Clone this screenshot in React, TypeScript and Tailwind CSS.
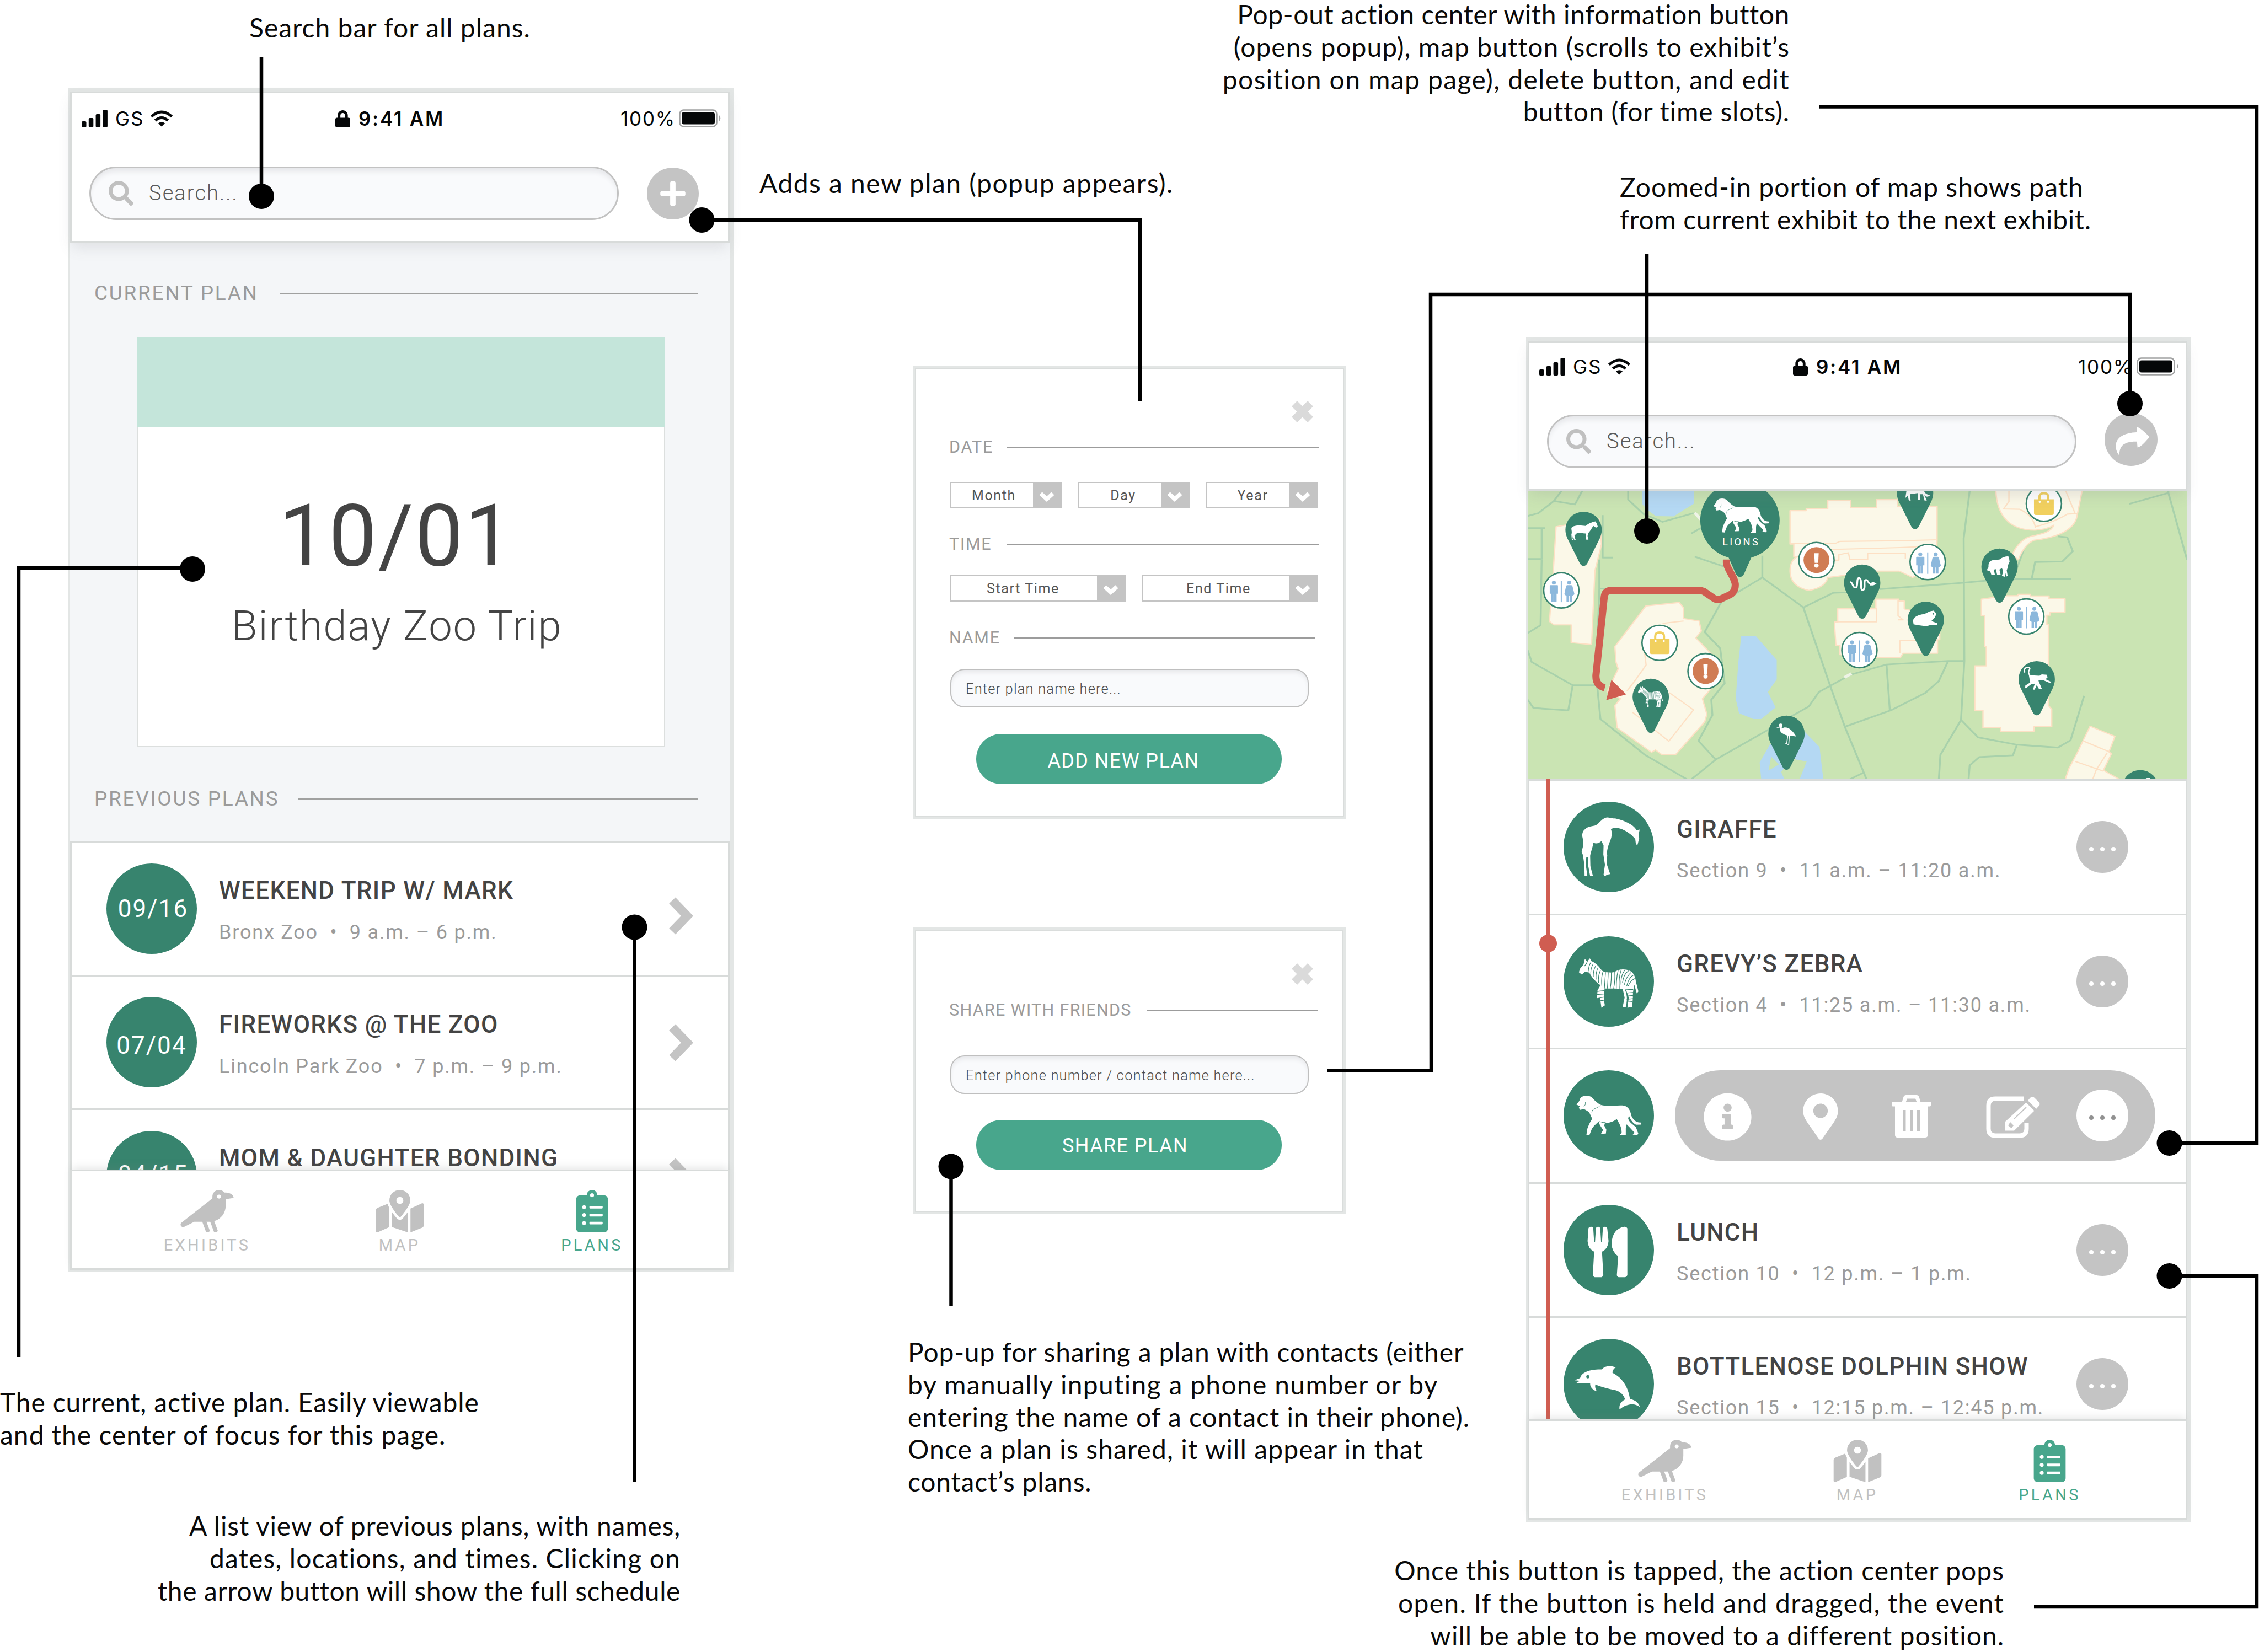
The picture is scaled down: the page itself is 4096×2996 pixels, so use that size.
import type { ReactNode } from "react";
import { FaClipboardList, FaCrow, FaInfoCircle, FaLock, FaMapMarkedAlt, FaMapMarkerAlt, FaPlus, FaSearch } from "react-icons/fa";

/* ---------- Animal and meal drawings ---------- */

function Zebra({ className = "", stripe = "#37846e", ...rest }: { className?: string; stripe?: string; x?: number; y?: number; width?: number; height?: number }) {
  return (
    <svg viewBox="234 696 264 194" preserveAspectRatio="none" className={className} {...rest}>
      <path
        fill="#fff"
        d="M236 752L241 738L256 722L262 700L272 711L284 698L290 709C306 714 322 728 333 742C340 750 350 753 362 752C376 753 384 754 395 749C412 738 440 738 462 748C476 756 482 772 484 788L495 826L488 834L477 800C474 815 470 830 471 850L468 886L447 889L453 850L442 822L435 816C447 840 447 855 441 885L426 888L435 850L427 817C400 814 372 815 348 815L346 830C342 850 346 865 349 880L334 889L328 850L315 852L317 822L330 802C310 790 290 770 281 753L262 750L249 761Z"
      />
      <g fill="none" stroke={stripe} strokeWidth="2.800">
        <path d="M274 706Q268 725 258 728M288 714Q278 728 277 748M298 720Q286 738 288 760M309 727Q297 748 299 770M319 735Q308 756 311 780M330 744Q318 768 322 792M340 752Q332 775 336 806" />
        <path d="M352 752Q349 785 347 815M364 752Q362 790 360 815M377 752Q378 790 372 815M392 750Q394 790 387 815M407 744Q398 775 399 815M421 742Q408 770 412 815M437 742Q416 765 420 802M452 746Q430 760 426 792M464 752Q442 768 434 800M473 763Q452 774 444 806M480 776Q462 782 450 806" />
        <path d="M314 826L346 823M314 838L344 836M328 850L346 848M330 862L346 860M438 820L472 818M442 832L472 830M444 844L472 842M444 856L472 854M442 868L470 866" />
      </g>
    </svg>
  );
}

function Lion({ className = "", line = "#37846e", ...rest }: { className?: string; line?: string; x?: number; y?: number; width?: number; height?: number }) {
  return (
    <svg viewBox="229 1236 281 158" preserveAspectRatio="none" className={className} {...rest}>
      <path
        fill="#fff"
        d="M230 1273L242 1259L247 1247C262 1235 285 1236 298 1246C308 1256 320 1268 338 1275C370 1282 410 1273 436 1277C455 1281 463 1297 467 1316C475 1332 487 1343 508 1342L509 1350L487 1351C473 1344 463 1331 458 1318L453 1324C454 1340 475 1350 487 1361L497 1385L493 1390L473 1389L480 1381C466 1366 455 1357 447 1349L443 1365V1392H416L425 1382C426 1360 414 1345 404 1329C388 1340 366 1345 353 1344L350 1354L359 1370L357 1385L336 1386L345 1371L331 1352L326 1338C316 1348 303 1355 296 1368L286 1391L273 1390L277 1366C284 1350 289 1340 298 1328L289 1310C285 1300 274 1296 262 1290L246 1293L240 1285L245 1279Z"
      />
      <g fill="none" stroke={line} strokeWidth="2">
        <path d="M334 1275C325 1286 304 1287 298 1296L296 1306" />
        <path d="M268 1262Q272 1272 261 1282M328 1338Q345 1344 356 1342" />
      </g>
    </svg>
  );
}

function Giraffe() {
  return (
    <svg viewBox="174 96 391 350" preserveAspectRatio="none" className="h-full w-full">
      <path
        fill="#fff"
        d="M365 157C376 158 384 161 400 161C425 166 447 174 465 184C476 190 484 198 490 206L503 204L499 222L501 238L494 262L487 262L484 240L468 225C450 213 430 200 402 197C392 196 384 199 379 203C387 220 380 240 371 257C364 275 360 290 363 303L360 335L374 372L375 376L362 378L353 384L347 378L353 340L346 300L347 265L338 248C325 258 315 260 303 254C301 270 292 290 289 305L290 345L301 383L289 384L281 345L279 310L272 312L271 345L277 383L265 384L264 340L258 303L252 288C259 270 262 255 255 230C254 212 262 205 275 197C290 188 305 194 322 182C335 170 350 156 365 157Z"
      />
    </svg>
  );
}

function Cutlery() {
  return (
    <svg viewBox="92 133 207 396" preserveAspectRatio="none" className="h-full w-full" fill="#fff">
      <path d="M149 236Q150 229 155 229Q159 229 160 236L162 297H164L166 236Q167 229 171 229Q175 229 176 236L178 297H180L182 236Q183 229 187 229Q191 229 192 236L195 292Q194 326 180 338L183 440Q182 450 176 450H166Q160 450 159 440L162 338Q148 326 147 292Z" />
      <path d="M238 236V440Q237 450 230 450H221Q214 450 214 440L217 358Q202 338 202 300Q204 240 230 229Q236 228 238 236Z" />
    </svg>
  );
}

function Dolphin() {
  return (
    <svg viewBox="92 723 207 396" preserveAspectRatio="none" className="h-full w-full">
      <path
        fill="#fff"
        d="M118 905Q124 897 130 895C133 866 158 855 180 857Q184 843 200 842L212 848Q204 856 204 872C224 890 240 930 244 986C254 990 263 1000 267 1021Q256 1008 246 1010Q232 1014 220 1032C219 1008 224 998 233 988C229 968 222 954 211 948C195 942 178 935 165 923C163 935 166 945 168 953C158 947 152 932 153 918L134 917Q124 920 121 913L131 907Z"
      />
      <ellipse cx="147.500" cy="889" rx="3.500" ry="7" fill="#37846e" />
    </svg>
  );
}

/* ---------- Small glyphs ---------- */

function ChevronRight({ className }: { className: string }) {
  return (
    <svg viewBox="0 0 46 70" className={`h-[70px] w-[46px] ${className}`}>
      <path d="M8 7L35 35L8 63" fill="none" stroke="#c4c4c4" strokeWidth="16" />
    </svg>
  );
}

function ChevronDown() {
  return (
    <svg viewBox="0 0 28 19" className="mt-[5px] h-[19px] w-[28px]">
      <path d="M3 4L14 14L25 4" fill="none" stroke="#fff" strokeWidth="7.500" />
    </svg>
  );
}

function Close() {
  return (
    <svg viewBox="0 0 41 41" className="ml-[618px] h-[41px] w-[41px]">
      <path d="M6 6L35 35M35 6L6 35" stroke="#dadada" strokeWidth="14" />
    </svg>
  );
}

function SignalBars() {
  return (
    <svg viewBox="0 0 47 32" className="h-8 w-[47px]" fill="#050708">
      <rect x="0" y="21" width="8.500" height="11" rx="2" />
      <rect x="12.800" y="15" width="8.500" height="17" rx="2" />
      <rect x="25.600" y="8" width="8.500" height="24" rx="2" />
      <rect x="38.400" y="0" width="8.500" height="32" rx="2" />
    </svg>
  );
}

function Wifi() {
  return (
    <svg viewBox="0 0 42 30" className="h-[30px] w-[42px]" fill="none" stroke="#050708" strokeWidth="5">
      <path d="M2.500 11.500Q21 -5.500 39.500 11.500" />
      <path d="M9.500 18.500Q21 8.500 32.500 18.500" />
      <path d="M21 29.500L15 23.500Q21 19 27 23.500Z" fill="#050708" stroke="none" />
    </svg>
  );
}

function Battery() {
  return (
    <svg viewBox="0 0 78 34" className="h-[34px] w-[78px]">
      <rect x="1.500" y="1.500" width="67" height="30" rx="7" fill="none" stroke="#a0a1a1" strokeWidth="2.500" />
      <rect x="5" y="5.500" width="60" height="22" rx="4" fill="#050708" />
      <path d="M73 11Q77.500 16.500 73 22Z" fill="#a0a1a1" />
    </svg>
  );
}

/* ---------- Phone shell ---------- */

function StatusBar() {
  return (
    <div className="flex h-10 items-center pl-[18px] font-[Inter,sans-serif] text-[35px] leading-10 text-[#050708]">
      <SignalBars />
      <span className="ml-[14px] w-[63px] tracking-[2px]">GS</span>
      <Wifi />
      <FaLock className="ml-[294px] h-[33px] w-[27px]" />
      <span className="ml-[15px] w-[170px] font-semibold tracking-[2.700px]">9:41 AM</span>
      <span className="ml-[305px] w-[106px] whitespace-nowrap tracking-[1.8px]">100%</span>
      <Battery />
    </div>
  );
}

function SearchField() {
  return (
    <div className="flex h-[97px] w-[960px] items-center rounded-full border-[3px] border-[#c2c2c2] bg-[#f9fafc] pl-[32px] text-[38px] font-light tracking-[2.1px] text-[#5a5a5a] shadow-[inset_0_10px_10px_-4px_#e6e7ea]">
      <FaSearch className="h-[45px] w-[45px] text-[#c0c0c0]" />
      <span className="ml-[28px]">Search...</span>
    </div>
  );
}

function NavItem({ icon, label, tone }: { icon: ReactNode; label: string; tone: string }) {
  return (
    <div className={`flex w-[349px] flex-col items-center ${tone}`}>
      {icon}
      <span className="mt-2 text-[29px] leading-[30px] tracking-[4.3px]">{label}</span>
    </div>
  );
}

function TabBar() {
  return (
    <div className="relative flex h-[182px] shrink-0 items-start border-[3px] border-[#d8dbda] bg-white pl-[71px] pt-[34px] shadow-[0_-8px_14px_-4px_rgba(120,125,130,0.18)]">
      <NavItem tone="text-[#c1c1c1]" label="EXHIBITS" icon={<FaCrow className="h-[77px] w-[97px]" />} />
      <NavItem tone="text-[#c1c1c1]" label="MAP" icon={<FaMapMarkedAlt className="h-[77px] w-[88px]" />} />
      <NavItem tone="text-[#48a68c]" label="PLANS" icon={<FaClipboardList className="h-[77px] w-[59px]" />} />
    </div>
  );
}

function Phone({ place, headerSize, action, children }: { place: string; headerSize: string; action: ReactNode; children: ReactNode }) {
  return (
    <section
      className={`absolute flex h-[2148px] w-[1206px] flex-col border-b-4 border-l-[3px] border-r-[7px] border-t-[7px] border-[#e3e6e5] bg-white font-[Roboto,sans-serif] ${place}`}
    >
      <header className={`relative z-10 shrink-0 border-[3px] border-b-4 border-[#d8dbda] bg-white shadow-[0_12px_24px_-4px_rgba(110,115,125,0.16)] ${headerSize}`}>
        <StatusBar />
        <div className="mt-[67px] flex items-center gap-[51px] pl-[32px]">
          <SearchField />
          {action}
        </div>
      </header>
      <div className="flex min-h-0 flex-1 flex-col overflow-hidden">{children}</div>
      <TabBar />
    </section>
  );
}

/* ---------- First screen: plans ---------- */

function SectionHeading({ label, labelWidth }: { label: string; labelWidth: string }) {
  return (
    <div className="flex h-[44px] items-center pl-[44px] pr-[57px] text-[#9b9b9b]">
      <span className={`text-[37px] leading-[44px] tracking-[2.700px] whitespace-nowrap ${labelWidth}`}>{label}</span>
      <span className="h-[3px] flex-1 bg-[#a0a1a0]" />
    </div>
  );
}

function PlanRow({ date, dateShift, title, detail, arrowShift }: { date: string; dateShift: string; title: string; detail?: string; arrowShift: string }) {
  return (
    <div className="flex h-[242.600px] shrink-0 items-center border-t-[3px] border-[#d8dbda] pl-[63px]">
      <div className="flex size-[164px] items-center justify-center rounded-full bg-[#37846e] text-[44px] leading-none tracking-[2.1px] text-white">
        <span className={dateShift}>{date}</span>
      </div>
      <div className="ml-[40px] mt-[9px] h-[126px] w-[814px] whitespace-nowrap">
        <div className="text-[44px] font-medium leading-[52px] tracking-[1.34px] text-[#444]">{title}</div>
        {detail && <div className="mt-[26px] text-[36px] leading-[48px] tracking-[1.8px] whitespace-pre text-[#9b9b9b]">{detail}</div>}
      </div>
      <ChevronRight className={arrowShift} />
    </div>
  );
}

function PlansScreen() {
  return (
    <Phone
      place="left-[124px] top-[159px]"
      headerSize="h-[275px] pt-[26px]"
      action={
        <div className="flex size-[94px] items-center justify-center rounded-full bg-[#c4c4c4]">
          <FaPlus className="size-[52px] text-white" />
        </div>
      }
    >
      <div className="flex h-[1084px] shrink-0 flex-col bg-[#f4f6f8] pt-[69px]">
        <SectionHeading label="CURRENT PLAN" labelWidth="w-[336px]" />
        <div className="ml-[121px] mt-[58px] h-[743px] w-[958px] border-2 border-[#dcdfde] bg-white text-[#444]">
          <div className="-mx-[2px] -mt-[2px] h-[163px] bg-[#c4e5da]" />
          <div className="mt-[120px] pl-[256px] text-[155px] leading-[155px] tracking-[2.8px]">10/01</div>
          <div className="mt-[47px] pl-[170px] text-[76px] font-light leading-[76px] tracking-[1.8px]">Birthday Zoo Trip</div>
        </div>
        <div className="mt-[72px]">
          <SectionHeading label="PREVIOUS PLANS" labelWidth="w-[370px]" />
        </div>
      </div>
      <div className="flex-1 border-x-[3px] border-[#d8dbda] bg-white">
        <PlanRow date="09/16" dateShift="ml-[5px]" title="WEEKEND TRIP W/ MARK" detail="Bronx Zoo  •  9 a.m. – 6 p.m." arrowShift="mt-[26px]" />
        <PlanRow date="07/04" dateShift="mt-[12px]" title="FIREWORKS @ THE ZOO" detail="Lincoln Park Zoo  •  7 p.m. – 9 p.m." arrowShift="mt-[2px]" />
        <PlanRow date="04/15" dateShift="-mt-[6px] ml-[5px]" title="MOM & DAUGHTER BONDING" arrowShift="mt-[2px]" />
      </div>
    </Phone>
  );
}

/* ---------- Popups ---------- */

function Popup({ place, pad, children }: { place: string; pad: string; children: ReactNode }) {
  return (
    <section className={`absolute border-[4px] border-[#e3e6e5] font-[Roboto,sans-serif] ${place}`}>
      <div className={`h-full border-2 border-[#dadddc] bg-white pl-[62px] ${pad}`}>
        <Close />
        {children}
      </div>
    </section>
  );
}

function FieldHeading({ label, labelWidth, lineWidth }: { label: string; labelWidth: string; lineWidth: string }) {
  return (
    <div className="flex h-[36px] items-center text-[30.500px] leading-[36px] text-[#9b9b9b]">
      <span className={`shrink-0 -ml-[2px] whitespace-nowrap ${labelWidth}`}>{label}</span>
      <span className={`h-[3px] shrink-0 bg-[#9c9c9c] ${lineWidth}`} />
    </div>
  );
}

function Select({ label, size, nudge }: { label: string; size: string; nudge: string }) {
  return (
    <div className={`flex h-[48px] border-2 border-[#c4c4c4] text-[25px] tracking-[1.6px] text-[#555] ${size}`}>
      <span className={`flex flex-1 items-center justify-center leading-none ${nudge}`}>{label}</span>
      <span className="flex w-[50px] items-center justify-center bg-[#c4c4c4]">
        <ChevronDown />
      </span>
    </div>
  );
}

function TextField({ placeholder }: { placeholder: string }) {
  return (
    <div className="flex h-[70px] w-[650px] items-center rounded-[26px] border-2 border-[#bfbfbf] bg-[#f9fafc] pl-[26px] pt-[2px] text-[25.500px] font-light tracking-[1.15px] text-[#4d4d4d] shadow-[inset_0_7px_8px_-3px_#e6e7ea]">
      {placeholder}
    </div>
  );
}

function PrimaryButton({ label, nudge }: { label: string; nudge: string }) {
  return (
    <div className={`ml-[47px] flex h-[91px] w-[554px] items-center justify-center rounded-full bg-[#48a68c] text-[36px] leading-none tracking-[1.4px] text-white ${nudge}`}>
      {label}
    </div>
  );
}

function AddPlanPopup() {
  return (
    <Popup place="left-[1655px] top-[663px] h-[823px] w-[786px]" pad="pt-[57px]">
      <div className="mt-[26px]">
        <FieldHeading label="DATE" labelWidth="w-[104px] tracking-[1.7px]" lineWidth="w-[566px]" />
      </div>
      <div className="mt-[45px] flex gap-[29px]">
        <Select label="Month" size="w-[202px]" nudge="pl-[6px]" />
        <Select label="Day" size="w-[203px]" nudge="pl-[12px]" />
        <Select label="Year" size="w-[203px]" nudge="pl-[18px]" />
      </div>
      <div className="mt-[47px]">
        <FieldHeading label="TIME" labelWidth="w-[104px] tracking-[1.7px]" lineWidth="w-[566px]" />
      </div>
      <div className="mt-[38px] flex gap-[30px]">
        <Select label="Start Time" size="w-[318px]" nudge="pr-[4px]" />
        <Select label="End Time" size="w-[318px]" nudge="pl-[9px]" />
      </div>
      <div className="mt-[48px]">
        <FieldHeading label="NAME" labelWidth="w-[118px] tracking-[1.7px]" lineWidth="w-[545px]" />
      </div>
      <div className="mt-[38px]">
        <TextField placeholder="Enter plan name here..." />
      </div>
      <div className="mt-[48px]">
        <PrimaryButton label="ADD NEW PLAN" nudge="pr-[20px] pt-[7px]" />
      </div>
    </Popup>
  );
}

function SharePopup() {
  return (
    <Popup place="left-[1655px] top-[1682px] h-[520px] w-[785px]" pad="pt-[58px]">
      <div className="mt-[27px]">
        <FieldHeading label="SHARE WITH FRIENDS" labelWidth="w-[358px] tracking-[1.300px]" lineWidth="w-[311px]" />
      </div>
      <div className="mt-[64px]">
        <TextField placeholder="Enter phone number / contact name here..." />
      </div>
      <div className="mt-[47px]">
        <PrimaryButton label="SHARE PLAN" nudge="pr-[14px] pt-[3px]" />
      </div>
    </Popup>
  );
}

/* ---------- Second screen: map and schedule ---------- */

function Pin({ x, y }: { x: number; y: number }) {
  return <path transform={`translate(${x} ${y})`} fill="#37846e" d="M0 -33.500A33 33 0 0 1 33 0C33 5 31.500 10 29.500 15L7 60Q4.500 65 0 65Q-4.500 65 -7 60L-29.500 15C-31.500 10 -33 5 -33 0A33 33 0 0 1 0 -33.500Z" />;
}

function Badge({ x, y, children }: { x: number; y: number; children: ReactNode }) {
  return (
    <g transform={`translate(${x} ${y})`}>
      <circle r="32" fill="#fff" stroke="#37846e" strokeWidth="2.600" />
      {children}
    </g>
  );
}

function Restroom({ x, y }: { x: number; y: number }) {
  return (
    <Badge x={x} y={y}>
      <g fill="#8cb8dc">
        <circle cx="-13.500" cy="-14" r="3.600" />
        <path d="M-20 -9.500H-7Q-6 -9.500 -6 -8V6H-8.500V21H-13V7H-14V21H-18.500V6H-21V-8Q-21 -9.500 -20 -9.500Z" />
        <rect x="-1" y="-17.500" width="2" height="39" />
        <circle cx="14.500" cy="-14" r="3.600" />
        <path d="M11 -9.500H18Q20 -9.500 20.500 -7L24 7L20.500 9.500H19.500V21H15V10H14V21H9.500V9.500H8.500L5.500 7L8.500 -7Q9 -9.500 11 -9.500Z" />
      </g>
    </Badge>
  );
}

function Shop({ x, y }: { x: number; y: number }) {
  return (
    <Badge x={x} y={y}>
      <path d="M-8 -2V-12Q-8 -19 0 -19Q8 -19 8 -12V-2" fill="none" stroke="#f1d05f" strokeWidth="4" />
      <path d="M-18 -8H18V17Q18 20.500 14.500 20.500H-14.500Q-18 20.500 -18 17Z" fill="#f1d05f" />
      <circle cx="-7.500" cy="-3.500" r="2" fill="#fff" />
      <circle cx="7.500" cy="-3.500" r="2" fill="#fff" />
    </Badge>
  );
}

function Alert({ x, y }: { x: number; y: number }) {
  return (
    <Badge x={x} y={y}>
      <circle r="23.500" fill="#d07c54" />
      <path d="M-4 -12.500H4L3.200 5H-3.200Z" fill="#fff" />
      <circle cy="9.800" r="3.900" fill="#fff" />
    </Badge>
  );
}

function ZooMap() {
  return (
    <svg viewBox="0 0 1198 524" preserveAspectRatio="none" className="block h-[523px] w-full shrink-0 bg-[#cae4b3]">
      <g transform="scale(0.40277 0.3512) translate(-22 -44)" strokeLinejoin="round">
        <g fill="#b4d8f3">
          <path d="M538 44L540 115L570 150L600 175L680 177L772 110V44Z" />
          <path d="M985 795H1050L1145 920V1020L1105 1085L1140 1165L1075 1225H1040L975 1195L960 1120L972 930Z" />
          <path d="M1115 1355L1270 1290L1338 1370L1355 1537H1248L1280 1445L1210 1430L1165 1500L1180 1537H1075L1068 1450Z" />
        </g>
        <path d="M1120 1420L1155 1460L1108 1492Z" fill="#cae4b3" />
        <g fill="none" stroke="#a8d1ab" strokeWidth="8.500">
          <path d="M175 44L140 97L235 115L268 44M140 97L70 160L22 175M475 44V90L545 165L630 205L770 160M22 237H100M85 237V400M22 397H85" />
          <path d="M85 400L80 740L22 780M360 170V390H405M345 400V550H760M345 550L330 1050M22 870L40 930L225 1050H335L350 1225L550 1410L740 1537" />
          <path d="M22 1125L48 1168L205 1180L225 1050M775 385L905 435M1080 380V493L895 620L820 775L890 860L910 1040L850 1125L855 1205L792 1338L870 1435L760 1537" />
          <path d="M1080 493L1265 648L1400 572L1458 570M1265 648L1385 1050L1452 1265L1550 1537M870 1435L1100 1285L1220 1205L1290 1160L1335 1085L1480 995L1640 943L1920 925H1991" />
          <path d="M1452 1265L1660 1180L1815 1090L1875 1030L1918 925M1640 943L1655 1180M1475 1537L1535 1503" />
          <path d="M2015 44L1988 290L1991 925L1976 1230L2053 1320L2228 1358L2413 1373L2470 1335L2531 1105M1976 1230L1883 1410L1876 1537" />
          <path d="M2228 1358L2210 1413L2058 1422L2015 1465L2010 1537M1608 553L1988 520L2158 502L2473 500M2413 280L2455 285L2480 357L2433 410L2310 413L2295 500M2735 112L2911 55L2995 400M2911 55V44M2258 350L2230 440M760 265L805 235" />
        </g>
        <path d="M775 158L805 195M1450 1010L1482 990" stroke="#eef3e6" strokeWidth="14" fill="none" />
        <g fill="#fbf8e8" stroke="#fde0c4" strokeWidth="6">
          <path d="M150 230L345 190L355 320L325 460L310 840L218 830V738H140L120 720L135 500Z" />
          <path d="M415 850L555 640L705 622L725 650V705L795 718L805 770L780 805L860 900L870 1040L810 1120L830 1200L820 1240L690 1408H625L598 1385L580 1397L425 1270L415 1155L440 1120L380 1085L430 965L420 930Z" />
          <path d="M1205 147H1278V137H1375V95H1478V130H1595V90H1690V125H1868V300L1863 420L1758 493L1698 460H1598L1375 493Q1365 545 1290 560Q1205 540 1205 460Q1205 400 1240 385H1222V320H1205Z" />
          <path d="M1420 655H1592V605H1695V615H1720V655L1880 700V815H1870V885H1715L1702 908H1560L1430 892V845H1412L1405 725H1420Z" />
          <path d="M2068 605L2178 587H2233V580H2288V588H2373V603H2445V672H2378V688H2363V735H2370V1155L2385 1175V1265H2305V1288H2155V1270H2075V1180H2038V950H2090V850H2083V690H2068Z" />
          <path d="M2133 44C2138 180 2200 248 2308 248C2330 247 2370 240 2395 222C2380 262 2330 270 2285 282C2250 295 2215 340 2208 380L2235 400C2245 370 2265 320 2305 300C2380 290 2490 260 2500 170L2522 44Z" />
          <path d="M2558 1262L2670 1315L2643 1395L2654 1405L2618 1490L2690 1537H2446L2463 1480L2500 1400Z" />
        </g>
        <g fill="none" stroke="#fde0c4" strokeWidth="6">
          <path d="M630 730L725 718M548 870L556 945L510 1020L470 1080M660 1088L770 1178L658 1340L495 1190" />
          <path d="M1205 318L1410 316L1430 306L1690 303L1862 298M1280 350L1480 345L1700 338L1862 330M1365 403H1425V375L1468 365L1475 400H1555V368H1725V395" />
          <path d="M1405 722H1595V650M1692 612V690L1715 712H1692M1592 845V908M1870 820H1700V885" />
          <path d="M2192 44V100L2168 138L2240 140Q2300 170 2312 235M2448 44L2490 160M2312 230Q2400 205 2455 165L2500 162" />
          <path d="M2530 1340L2645 1395M2492 1445L2618 1495M2585 1490L2570 1537M2635 1400L2585 1490" />
        </g>
      </g>

      <path
        d="M361 125V131C361 141 377 158 377 171C377 180 373 187 365 190L350 197Q345 199 339 196L320 183Q316 181 311 181H152Q140 181 139 193L124 335Q123 354 140 358"
        fill="none"
        stroke="#d05d51"
        strokeWidth="13"
      />
      <path d="M152 343.500L179 370L142.600 380.500Z" fill="#d05d51" />

      <Pin x={101.500} y={71.500} />
      <Restroom x={61} y={181} />
      <Shop x={239.600} y={276.400} />
      <Alert x={323} y={327.700} />
      <Pin x={223.500} y={375} />
      <Zebra x={200} y={355} width={46} height={39} />
      <Alert x={524.500} y={126} />
      <Restroom x={602.500} y={289.500} />
      <Pin x={607.500} y={167.500} />
      <Pin x={470} y={442} />
      <Pin x={703.500} y={4.500} />
      <Restroom x={726.500} y={129.500} />
      <Pin x={723} y={235} />
      <Shop x={937.500} y={23.500} />
      <Pin x={857} y={138.500} />
      <Restroom x={905.600} y={228.500} />
      <Pin x={924.500} y={343} />
      <Pin x={1112.500} y={541} />

      <g transform="scale(0.40277 0.3512) translate(-20 -44)" fill="#fff">
        <path d="M217 238C220 226 240 222 260 224L281 226C295 212 308 207 325 202L332 214L336 230L328 235L316 226C308 238 304 250 294 262L290 278L294 297H284L281 265C265 264 250 258 243 262L231 276L233 290L239 297H229L224 275L222 293L227 298H219L217 270C221 258 217 250 217 238Z" />
        <path d="M1141 1271L1156 1262C1150 1253 1156 1246 1166 1250C1174 1256 1164 1266 1166 1274C1187 1258 1212 1278 1231 1316C1215 1311 1188 1316 1170 1300C1158 1292 1154 1278 1158 1269Z" />
        <path d="M1193 1308L1188 1352L1181 1354M1200 1308L1197 1358L1189 1359" fill="none" stroke="#fff" strokeWidth="4" />
        <path d="M1473 517C1487 515 1484 546 1497 545C1513 545 1500 495 1514 495C1532 498 1516 558 1530 558C1549 555 1530 506 1546 505C1559 508 1553 529 1570 527" fill="none" stroke="#fff" strokeWidth="8" />
        <path d="M1562 522L1580 516L1594 526L1578 534H1562Z" />
        <path d="M1728 44L1723 82L1734 68L1738 92L1747 98L1744 62L1778 56L1780 90L1790 92L1788 62L1802 62L1810 95L1820 94L1808 66Q1818 82 1834 68L1816 60L1806 44Z" />
        <path d="M2090 455L2098 440C2096 415 2105 403 2125 402L2147 400C2160 388 2178 380 2190 385L2193 412C2184 424 2186 445 2180 455L2184 484L2178 488L2174 470L2172 489L2158 485C2166 462 2162 450 2158 445L2147 452L2153 480H2137L2131 450L2122 452L2127 480H2111L2106 462Z" />
        <path d="M1758 718C1757 700 1778 684 1808 682L1833 668L1851 664L1863 680L1856 700L1840 718L1868 730L1866 738H1838L1818 745L1785 740L1760 735Z" />
        <ellipse cx="1849" cy="680" rx="4" ry="5" fill="#37846e" />
        <path d="M2285 1000Q2276 988 2280 975Q2291 957 2273 957Q2253 965 2262 984" fill="none" stroke="#fff" strokeWidth="6" />
        <path d="M2280 998L2328 1001L2338 994L2362 996L2364 1012L2354 1018L2381 1033L2378 1040L2343 1023L2323 1026L2339 1070H2326L2315 1050L2306 1073H2298L2307 1042L2290 1045L2270 1063L2263 1066L2264 1052L2286 1036Z" />
        <path d="M2800 1537L2812 1530L2826 1530L2830 1537Z" />
      </g>

      <path fill="#37846e" d="M385.500 -16A70 70 0 0 1 406 121.500L393 151Q390 156.500 385.500 156.500Q381 156.500 378 151L365 121.500A70 70 0 0 1 385.500 -16Z" />
      <Lion x={337} y={13} width={102} height={64} />
      <text x="353.500" y="99" fill="#fff" fontFamily="Roboto, sans-serif" fontSize="18.500" letterSpacing="3.300">
        LIONS
      </text>
    </svg>
  );
}

function Dots({ className }: { className: string }) {
  return (
    <div className={`flex size-[94px] shrink-0 items-center justify-center gap-[12px] rounded-full pt-[8px] ${className}`}>
      <span className="size-[8px] rounded-full bg-current" />
      <span className="size-[8px] rounded-full bg-current" />
      <span className="size-[8px] rounded-full bg-current" />
    </div>
  );
}

function StopRow({ icon, children }: { icon: ReactNode; children: ReactNode }) {
  return (
    <div className="flex h-[243.500px] shrink-0 items-center border-t-[3px] border-[#d8dbda] pl-[62px]">
      <div className="flex size-[164px] shrink-0 items-center justify-center rounded-full bg-[#37846e]">{icon}</div>
      {children}
    </div>
  );
}

function StopInfo({ title, detail }: { title: string; detail: string }) {
  return (
    <>
      <div className="ml-[41px] mt-[9px] w-[725px] whitespace-nowrap">
        <div className="text-[44px] font-medium leading-[52px] tracking-[1.34px] text-[#444]">{title}</div>
        <div className="mt-[25px] text-[36px] leading-[48px] tracking-[1.8px] whitespace-pre text-[#9b9b9b]">{detail}</div>
      </div>
      <Dots className="bg-[#c4c4c4] text-white" />
    </>
  );
}

function TrashIcon() {
  return (
    <svg viewBox="0 0 71 77" className="h-[77px] w-[71px]" fill="#fff" fillRule="evenodd">
      <path d="M0 13H18.500L21.500 3Q23 0 26 0H45Q48 0 49.500 3L52.500 13H71V18.500Q71 20.500 69 20.500H65.500V73Q65 77 60.500 77H10.500Q6.500 77 6 73V20.500H2Q0 20.500 0 18.500ZM25.500 13H45.500L43 6.500H28ZM20 27V65H25.500V27ZM33 27V65H38.500V27ZM46 27V65H51.500V27Z" />
    </svg>
  );
}

function EditIcon() {
  return (
    <svg viewBox="0 0 98 76" className="h-[76px] w-[98px]">
      <path d="M68 4.500H17Q4.500 4.500 4.500 17V59Q4.500 71.500 17 71.500H61Q73.500 71.500 73.500 59V49" fill="none" stroke="#fff" strokeWidth="8" />
      <path d="M33 65V44L72.500 9L91 27L53 65Z" fill="#c4c4c4" />
      <path d="M35 62.500V46L72.500 11.500L87.500 26.500L51 62.500Z" fill="#fff" />
      <path d="M76 8L80 3Q84 -1 88 3L95.500 10.500Q99.500 14.500 95.500 18L91 23Z" fill="#fff" />
      <path d="M44 47L50 53L46 58L40 53Z" fill="#c4c4c4" />
      <path d="M51 41L73 20" stroke="#c4c4c4" strokeWidth="1.800" />
    </svg>
  );
}

function ActionCenter() {
  return (
    <div className="ml-[38px] flex h-[164px] w-[871px] shrink-0 items-center rounded-full bg-[#c4c4c4] pl-[51px] text-white">
      <FaInfoCircle className="mt-[5px] size-[89px]" />
      <FaMapMarkerAlt className="ml-[88px] mt-[4px] h-[84px] w-[72px]" />
      <div className="ml-[93px] mt-[3px]">
        <TrashIcon />
      </div>
      <div className="ml-[100px] mt-[5px]">
        <EditIcon />
      </div>
      <Dots className="ml-[66px] bg-white text-[#919191]" />
    </div>
  );
}

function ScheduleScreen() {
  return (
    <Phone
      place="left-[2767px] top-[612px]"
      headerSize="h-[271px] pt-[23px]"
      action={
        <div className="-mt-[8px] size-[96px] rounded-full bg-[#c4c4c4]">
          <svg viewBox="1245 586 111 396" preserveAspectRatio="none" className="size-full">
            <path d="M1276 905C1262 840 1264 738 1312 730L1313 690C1320 696 1332 738 1339 765C1333 792 1322 838 1314 844L1313 800C1283 798 1276 838 1276 905Z" fill="#fff" />
          </svg>
        </div>
      }
    >
      <ZooMap />
      <div className="relative flex-1 border-x-[3px] border-[#d8dbda] bg-white">
        <StopRow icon={<Giraffe />}>
          <StopInfo title="GIRAFFE" detail="Section 9  •  11 a.m. – 11:20 a.m." />
        </StopRow>
        <StopRow icon={<Zebra className="mt-[6px] h-[91px] w-[110px]" />}>
          <StopInfo title="GREVY’S ZEBRA" detail="Section 4  •  11:25 a.m. – 11:30 a.m." />
        </StopRow>
        <StopRow icon={<Lion className="h-[74px] w-[118px]" />}>
          <ActionCenter />
        </StopRow>
        <StopRow icon={<Cutlery />}>
          <StopInfo title="LUNCH" detail="Section 10  •  12 p.m. – 1 p.m." />
        </StopRow>
        <StopRow icon={<Dolphin />}>
          <StopInfo title="BOTTLENOSE DOLPHIN SHOW" detail="Section 15  •  12:15 p.m. – 12:45 p.m." />
        </StopRow>
        {/* Progress line with the visitor's current stop */}
        <div className="absolute bottom-0 left-[31px] top-0 w-[6px] bg-[#d05d51]">
          <span className="absolute -left-[13px] top-[282px] size-[32px] rounded-full bg-[#d05d51]" />
        </div>
      </div>
    </Phone>
  );
}

/* ---------- Callouts ---------- */

function Note({ place, lines }: { place: string; lines: [text: string, tracking: string][] }) {
  return (
    <p className={`absolute font-[Lato,sans-serif] text-[48px] leading-[58.800px] whitespace-nowrap text-[#0a0a0a] ${place}`}>
      {lines.map(([text, tracking]) => (
        <span key={text} className={`block ${tracking}`}>
          {text}
        </span>
      ))}
    </p>
  );
}

function Leaders() {
  const dots: [number, number][] = [
    [474, 356],
    [1272.5, 399],
    [349, 1032],
    [1150.5, 1681.5],
    [1724.5, 2115.5],
    [3862, 732],
    [2986, 963],
    [3933.5, 2073],
    [3933.5, 2314],
  ];
  return (
    <svg viewBox="0 0 4096 2996" className="pointer-events-none absolute inset-0 z-20 h-[2996px] w-[4096px]">
      <g fill="none" stroke="#000" strokeWidth="6.500">
        <path d="M474 104V356" />
        <path d="M1272 399H2067V727" />
        <path d="M349 1030H34V2461" />
        <path d="M1150.500 1681V2688" />
        <path d="M1724.500 2115V2368" />
        <path d="M2406 1941.500H2595L2594 534H3862V732" />
        <path d="M2986 460V963" />
        <path d="M3298 193.500H4092V2073H3933" />
        <path d="M3933 2314H4092V2914H3688" />
      </g>
      {dots.map(([cx, cy]) => (
        <circle key={`${cx}-${cy}`} cx={cx} cy={cy} r="23" />
      ))}
    </svg>
  );
}

export default function App() {
  return (
    <main className="relative h-[2996px] w-[4096px] overflow-hidden bg-white">
      <PlansScreen />
      <AddPlanPopup />
      <SharePopup />
      <ScheduleScreen />
      <Note place="left-[452px] top-[21px]" lines={[["Search bar for all plans.", "tracking-[1px]"]]} />
      <Note place="left-[1377px] top-[303px]" lines={[["Adds a new plan (popup appears).", "tracking-[1.45px]"]]} />
      <Note
        place="right-[851px] top-[-3px] text-right"
        lines={[
          ["Pop-out action center with information button", "tracking-[0.63px]"],
          ["(opens popup), map button (scrolls to exhibit’s", "tracking-[1px]"],
          ["position on map page), delete button, and edit", "tracking-[1.37px]"],
          ["button (for time slots).", "tracking-[0.800px]"],
        ]}
      />
      <Note
        place="left-[2937px] top-[310px]"
        lines={[
          ["Zoomed-in portion of map shows path", "tracking-[1px]"],
          ["from current exhibit to the next exhibit.", "tracking-[0.6px]"],
        ]}
      />
      <Note
        place="left-[1646px] top-[2423px]"
        lines={[
          ["Pop-up for sharing a plan with contacts (either", "tracking-[0.83px]"],
          ["by manually inputing a phone number or by", "tracking-[1.3px]"],
          ["entering the name of a contact in their phone).", "tracking-[0.97px]"],
          ["Once a plan is shared, it will appear in that", "tracking-[1.1px]"],
          ["contact’s plans.", "tracking-[0.8px]"],
        ]}
      />
      <Note
        place="left-0 top-[2514px]"
        lines={[
          ["The current, active plan. Easily viewable", "tracking-[0.85px]"],
          ["and the center of focus for this page.", "tracking-[1px]"],
        ]}
      />
      <Note
        place="right-[2862px] top-[2738px] text-right"
        lines={[
          ["A list view of previous plans, with names,", "tracking-[0.82px]"],
          ["dates, locations, and times. Clicking on", "tracking-[1.15px]"],
          ["the arrow button will show the full schedule", "tracking-[0.58px]"],
        ]}
      />
      <Note
        place="right-[462px] top-[2819px] text-right"
        lines={[
          ["Once this button is tapped, the action center pops", "tracking-[1.05px]"],
          ["open. If the button is held and dragged, the event", "tracking-[1.26px]"],
          ["will be able to be moved to a different position.", "tracking-[1px]"],
        ]}
      />
      <Leaders />
    </main>
  );
}
